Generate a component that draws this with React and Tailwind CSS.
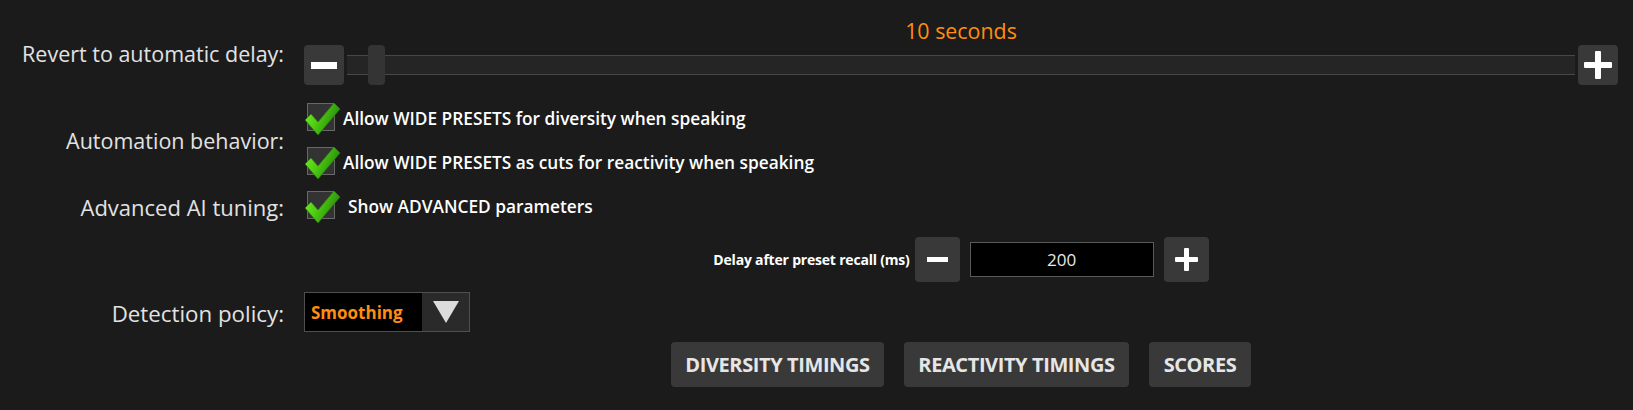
import React from 'react';

const font = { fontFamily: '"Open Sans", "Noto Sans", sans-serif' };

const Check = ({ id }) => (
  <svg className="absolute -left-[3px] -top-[2px]" width="36" height="34" viewBox="0 0 36 34">
    <defs>
      <linearGradient id={id} x1="0" y1="0" x2="1" y2="0.4">
        <stop offset="0" stopColor="#7cf02c" />
        <stop offset="0.45" stopColor="#4fcf12" />
        <stop offset="1" stopColor="#2a8a0c" />
      </linearGradient>
    </defs>
    <polygon points="0,18 6,12 13,20 29,1 35,7 13,33" fill={`url(#${id})`} stroke="#2c7a0e" strokeWidth="0.8" strokeLinejoin="round" />
  </svg>
);

const CheckRow = ({ id, label, textGap = 'ml-2' }) => (
  <div className="flex items-center h-[44px]">
    <div className="relative ml-[3px] w-[28px] h-[28px] bg-[#333] border-[1.5px] border-[#686868]">
      <Check id={id} />
    </div>
    <span className={`${textGap} pt-[4px] text-white text-[17.3px] font-semibold`}>{label}</span>
  </div>
);

const SquareBtn = ({ size, children }) => (
  <button className={`${size} shrink-0 rounded-[4px] bg-[#393939] flex items-center justify-center`}>{children}</button>
);

const Minus = ({ w, h }) => <div className={`${w} ${h} bg-white`} />;

const Plus = ({ s, t }) => (
  <svg width={s} height={s} viewBox={`0 0 ${s} ${s}`}>
    <rect x={(s - t) / 2} y="0" width={t} height={s} rx="1" fill="#fff" />
    <rect x="0" y={(s - t) / 2} width={s} height={t} rx="1" fill="#fff" />
  </svg>
);

const label = 'text-right text-[21.5px] leading-[28px] text-[#e2e2e2]';

export default function App() {
  return (
    <div className="w-full h-[410px] bg-[#1b1b1b] pt-[17px] pr-[15px] overflow-hidden" style={font}>
      {/* slider caption */}
      <div className="flex">
        <div className="w-[284px] shrink-0" />
        <div className="flex-1 ml-5 text-center text-[21.4px] leading-[28px] text-[#ff8d0f]">10 seconds</div>
      </div>

      {/* slider */}
      <div className="flex h-[40px]">
        <div className={`w-[284px] shrink-0 -mt-[5px] ${label}`}>Revert to automatic delay:</div>
        <div className="flex-1 ml-5 flex items-center gap-[3px]">
          <SquareBtn size="w-[40px] h-[40px]"><Minus w="w-[26px]" h="h-[7px]" /></SquareBtn>
          <div className="relative flex-1 h-[20px] bg-[#252525] border-y border-[#474747]">
            <div className="absolute left-[21px] -top-[11px] w-[17px] h-[40px] rounded-[4px] bg-[#343434]" />
          </div>
          <SquareBtn size="w-[40px] h-[40px]"><Plus s={28} t={6} /></SquareBtn>
        </div>
      </div>

      {/* automation */}
      <div className="flex mt-[10px]">
        <div className={`w-[284px] shrink-0 flex items-center justify-end pt-[4px] ${label}`}>Automation behavior:</div>
        <div className="flex-1 ml-5">
          <CheckRow id="g1" label="Allow WIDE PRESETS for diversity when speaking" />
          <CheckRow id="g2" label="Allow WIDE PRESETS as cuts for reactivity when speaking" />
        </div>
      </div>

      <div className="flex">
        <div className={`w-[284px] shrink-0 flex items-center justify-end pt-[4px] text-[22px] ${label}`}>Advanced AI tuning:</div>
        <div className="flex-1 ml-5">
          <CheckRow id="g3" label="Show ADVANCED parameters" textGap="ml-[13px]" />
        </div>
      </div>

      {/* delay */}
      <div className="flex mt-[10px] h-[45px]">
        <div className="w-[284px] shrink-0" />
        <div className="flex-1 ml-5 flex items-center justify-center">
          <span className="text-white text-[14px] font-bold tracking-[-0.2px] mr-[5px]">Delay after preset recall (ms)</span>
          <SquareBtn size="w-[45px] h-[45px]"><Minus w="w-[21px]" h="h-[5px]" /></SquareBtn>
          <div className="ml-[10px] w-[184px] h-[35px] bg-black border border-[#5a5a5a] flex items-center justify-center text-[17px] text-[#e8e8e8]">200</div>
          <div className="ml-[10px]">
            <SquareBtn size="w-[45px] h-[45px]"><Plus s={23} t={5} /></SquareBtn>
          </div>
        </div>
      </div>

      {/* detection */}
      <div className="flex mt-[10px] h-[40px]">
        <div className={`w-[284px] shrink-0 flex items-center justify-end pt-[4px] ${label} text-[22.3px]`}>Detection policy:</div>
        <div className="flex-1 ml-5 flex">
          <div className="w-[166px] h-[40px] border border-[#4f4f4f] flex">
            <div className="flex-1 bg-black flex items-center pl-[6px] pt-[2px] text-[17px] font-bold text-[#ff8d0f]">Smoothing</div>
            <div className="w-[47px] bg-[#2a2a2a] flex items-center justify-center">
              <svg width="26" height="22" viewBox="0 0 26 22"><polygon points="0,0 26,0 13,22" fill="#dcdcdc" /></svg>
            </div>
          </div>
        </div>
      </div>

      {/* buttons */}
      <div className="flex mt-[10px] h-[45px]">
        <div className="w-[284px] shrink-0" />
        <div className="flex-1 ml-5 flex justify-center gap-5">
          {[['DIVERSITY TIMINGS', 'w-[213px]'], ['REACTIVITY TIMINGS', 'w-[225px]'], ['SCORES', 'w-[102px]']].map(([t, w]) => (
            <button key={t} className={`${w} h-[45px] rounded-[4px] bg-[#393939] text-[#e6e6e6] text-[20px] font-bold tracking-[-0.4px]`}>{t}</button>
          ))}
        </div>
      </div>
    </div>
  );
}
